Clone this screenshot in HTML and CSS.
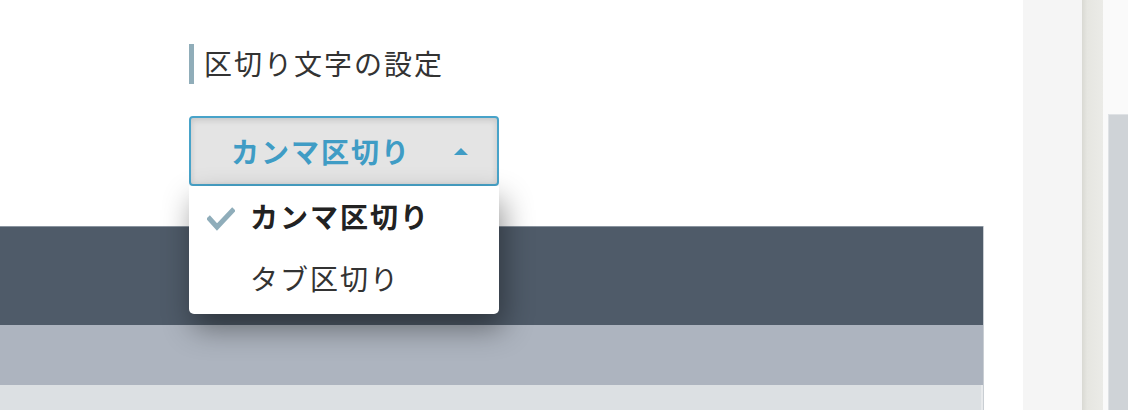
FILE: index.html
```html
<!DOCTYPE html>
<html lang="ja">
<head>
  <meta charset="UTF-8">
  <title>区切り文字の設定</title>
  <link rel="stylesheet" href="styles.css">
</head>
<body>
  <div class="page">
    <main class="main">
      <section class="setting">
        <h2 class="setting-title">区切り文字の設定</h2>

        <!-- Delimiter dropdown -->
        <div class="dropdown">
          <button type="button" class="dropdown-toggle">
            <span>カンマ区切り</span>
            <span class="caret"></span>
          </button>
          <ul class="dropdown-menu">
            <li class="dropdown-item selected">
              <svg class="check" width="28" height="28" viewBox="0 0 28 28">
                <polyline points="1,14 10,24 27,6" fill="none" stroke="#8fadba" stroke-width="5"/>
              </svg>
              カンマ区切り
            </li>
            <li class="dropdown-item">タブ区切り</li>
          </ul>
        </div>
      </section>

      <div class="table">
        <div class="table-head"></div>
        <div class="table-row"></div>
        <div class="table-row light"></div>
      </div>
    </main>

    <aside class="side">
      <div class="side-col"></div>
      <div class="side-divider"></div>
      <div class="side-panel-wrap">
        <div class="side-panel"></div>
      </div>
    </aside>
  </div>
</body>
</html>
```

FILE: styles.css
```css
body {
  margin: 0;
  font-family: "Noto Sans CJK JP", "Noto Sans", sans-serif;
  color: #333;
  background-color: #fff;
  overflow: hidden;
}
.page {
  display: flex;
  height: 410px;
}
.main {
  width: 1023px;
  flex-shrink: 0;
  background-color: #fff;
}
.setting {
  padding: 44px 0 0 189px;
}
.setting-title {
  margin: 0;
  height: 40px;
  line-height: 38px;
  border-left: 5px solid #90adb9;
  padding-left: 10px;
  font-size: 28px;
  font-weight: normal;
  letter-spacing: 2px;
  color: #333;
}
.dropdown {
  position: relative;
  margin-top: 32px;
  width: 310px;
}
.dropdown-toggle {
  display: flex;
  align-items: center;
  box-sizing: border-box;
  width: 310px;
  height: 70px;
  padding: 0 29px 0 40px;
  border: 2px solid #48a3c9;
  border-radius: 4px;
  background-color: #e4e4e4;
  box-shadow: inset 0 2px 6px rgba(0, 0, 0, 0.14);
  font-family: inherit;
  font-size: 28px;
  font-weight: bold;
  letter-spacing: 2px;
  color: #3f9cc5;
  cursor: pointer;
}
.caret {
  margin-left: auto;
  width: 0;
  height: 0;
  border-left: 7px solid transparent;
  border-right: 7px solid transparent;
  border-bottom: 7px solid #3f9cc5;
}
.dropdown-menu {
  position: absolute;
  top: 70px;
  left: 0;
  z-index: 10;
  box-sizing: border-box;
  width: 310px;
  height: 128px;
  margin: 0;
  padding: 0;
  list-style: none;
  background-color: #fff;
  border-radius: 0 0 5px 5px;
  box-shadow: 4px 14px 30px rgba(0, 0, 0, 0.42);
}
.dropdown-item {
  position: relative;
  height: 62px;
  line-height: 60px;
  padding-left: 61px;
  font-size: 28px;
  letter-spacing: 2px;
  color: #333;
}
.dropdown-item.selected {
  font-weight: bold;
  color: #222;
}
.check {
  position: absolute;
  left: 18px;
  top: 17px;
}
.table {
  margin-top: 40px;
  width: 984px;
  border-right: 1px solid #c9ced3;
  box-sizing: border-box;
}
.table-head {
  height: 99px;
  background-color: #4f5b69;
  border-top: 1px solid #8a949f;
  box-sizing: border-box;
}
.table-row {
  height: 60px;
  background-color: #adb4bf;
}
.table-row.light {
  height: 25px;
  background-color: #dce0e3;
  border-right: 2px solid #e8eaec;
}
.side {
  flex: 1;
  display: flex;
}
.side-col {
  width: 59px;
  background-color: #f5f5f5;
}
.side-divider {
  width: 21px;
  background: linear-gradient(to right, #d9d9d3, #e6e6e1 25%, #ebebe7);
}
.side-panel-wrap {
  flex: 1;
  background-color: #fafafa;
  padding: 114px 0 0 5px;
}
.side-panel {
  height: 100%;
  background-color: #cfd3d7;
  border-left: 1px solid #dfe2e5;
  border-top: 1px solid #dfe2e5;
}
```
